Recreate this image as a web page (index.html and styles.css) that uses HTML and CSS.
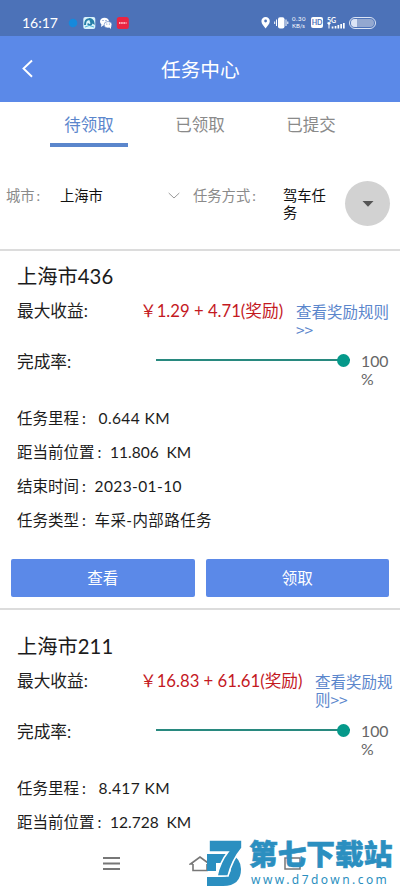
FILE: index.html
```html
<!DOCTYPE html>
<html lang="zh-CN">
<head>
<meta charset="utf-8">
<meta name="viewport" content="width=device-width">
<title>任务中心</title>
<link rel="stylesheet" href="styles.css">
</head>
<body>
<div class="status">
  <span class="clock">16:17</span>
  <svg class="apps" width="62" height="14" viewBox="0 0 62 14">
    <circle cx="5" cy="7" r="4.3" fill="#1689dc"/>
    <rect x="15.3" y="1" width="12" height="12" rx="2" fill="#d9f3fb"/>
    <path d="M17 9c0-8 8-7 8.500-2l-2.500-1.500c1.500 3.500-2 5-3 2" fill="none" stroke="#277fa8" stroke-width="2"/>
    <path d="M17 11q4-3 9 0" fill="none" stroke="#55b8dd"/>
    <ellipse cx="36.500" cy="5.500" rx="4.500" ry="3.800" fill="#fff"/>
    <ellipse cx="40" cy="8.800" rx="3.900" ry="3.300" fill="#fff" stroke="#4c72b8" stroke-width=".6"/>
    <path d="M33.500 8l-.5 3 3-2zM41 11l2 2v-3z" fill="#fff"/>
    <g fill="#4c72b8"><circle cx="35" cy="4.500" r=".6"/><circle cx="38" cy="4.500" r=".6"/><circle cx="38.800" cy="8" r=".5"/><circle cx="41.300" cy="8" r=".5"/></g>
    <rect x="48.800" y="1" width="12" height="12" rx="2.500" fill="#ea2442"/>
    <path d="M51 7h7.500" stroke="#ffb3be" stroke-width="2" stroke-dasharray="1.500 .7"/>
  </svg>
  <svg class="loc" width="28" height="14" viewBox="0 0 28 14">
    <path d="M4.600 1a4.200 4.200 0 0 1 4.200 4.200c0 3-2.700 4.700-4.200 7.300C3 10 .4 8.200.4 5.200A4.200 4.200 0 0 1 4.600 1z" fill="#fff"/>
    <circle cx="4.600" cy="5" r="1.400" fill="#4c72b8"/>
    <rect x="17" y="1.200" width="6.500" height="11.200" rx="2" fill="#fff"/>
    <path d="M15.500 3.500v6.500M25 3.500v6.500M13.700 5.500v2.500M26.800 5.500v2.500" stroke="#fff" stroke-width="1"/>
  </svg>
  <span class="speed"><span class="rateval">0.30</span><span>KB/s</span></span>
  <span class="hd">HD</span>
  <span class="net"><span class="g5">5G</span>
    <svg width="18" height="6" viewBox="0 0 18 6"><path d="M0 0h4L2 2.500zM1.500 2h1v3.500h-1zM4.700 3.500h1.700v2H4.700zM7.700 2.900h1.700v2.600H7.700zM10.500 2h1.700v3.500h-1.700zM13.300 1H15v4.500h-1.700zM16 0h1.700v5.500H16z" fill="#fff"/></svg>
  </span>
  <span class="battery"><span class="charge"></span></span>
</div>
<header class="bar">
  <svg width="12" height="20" viewBox="0 0 12 20"><path d="M10 1.500L1.500 9.500 10 17.800" fill="none" stroke="#fff" stroke-width="1.900"/></svg>
  <h1>任务中心</h1>
</header>
<nav class="tabs">
  <a class="tab on">待领取</a><a class="tab">已领取</a><a class="tab">已提交</a>
</nav>
<section class="filters">
  <span class="flabel city">城市<i>:</i></span>
  <span class="fvalue cityname">上海市</span>
  <svg class="chev" width="12" height="8" viewBox="0 0 12 8"><path d="M.7 1L6 6l5.300-5" fill="none" stroke="#999" stroke-width="1"/></svg>
  <span class="flabel mode">任务方式<i>:</i></span>
  <span class="fvalue modename">驾车任务</span>
  <span class="drop"><svg width="12" height="6" viewBox="0 0 12 6"><path d="M.5 0h11L6 5.800z" fill="#555"/></svg></span>
</section>
<main>
  <article class="card">
    <h2>上海市<span class="num">436</span></h2>
    <div class="row gain"><span class="label">最大收益:</span><span class="money">￥1.29 + 4.71(奖励)</span><a class="rule">查看奖励规则&gt;&gt;</a></div>
    <div class="row rate"><span class="label">完成率:</span><span class="slider"><span class="thumb"></span></span><span class="pct">100<br>%</span></div>
    <dl class="details">
      <div><dt>任务里程</dt><dd class="dist">0.644 KM</dd></div>
      <div><dt>距当前位置</dt><dd>11.806&nbsp; KM</dd></div>
      <div><dt>结束时间</dt><dd class="date">2023-01-10</dd></div>
      <div><dt>任务类型</dt><dd class="date">车采-内部路任务</dd></div>
    </dl>
    <div class="actions"><button>查看</button><button>领取</button></div>
  </article>
  <article class="card">
    <h2>上海市<span class="num">211</span></h2>
    <div class="row gain"><span class="label">最大收益:</span><span class="money wide">￥16.83 + 61.61(奖励)</span><a class="rule">查看奖励规则&gt;&gt;</a></div>
    <div class="row rate"><span class="label">完成率:</span><span class="slider"><span class="thumb"></span></span><span class="pct">100<br>%</span></div>
    <dl class="details">
      <div><dt>任务里程</dt><dd class="dist">8.417 KM</dd></div>
      <div><dt>距当前位置</dt><dd>12.728&nbsp; KM</dd></div>
    </dl>
  </article>
</main>
<footer class="sysnav">
  <svg width="18" height="16" viewBox="0 0 18 16"><path d="M0 2h17M0 7.500h17M0 13h17" stroke="#777" stroke-width="2"/></svg>
  <svg class="home" width="22" height="16" viewBox="0 0 22 16"><path d="M4 8H1.500L11 1l9.500 7H18M4 8v6.500h14V8" fill="none" stroke="#777" stroke-width="1.600"/></svg>
  <svg class="square" width="18" height="16" viewBox="0 0 18 16"><rect x="1" y="2" width="15" height="11" fill="none" stroke="#777" stroke-width="1.500"/></svg>
</footer>
<div class="mark">
  <svg width="38" height="50" viewBox="0 0 38 50">
    <path d="M2 16H26Q36 21 36 31Q36 48 18 48H2V39H16Q26 39 26 30Q26 25 22 25H11V33H2z" fill="#2b8fc0"/>
    <path d="M4 2H37V10Q27 22 23 38H12Q15 24 23 14H4z" fill="#2b8fc0" stroke="#fff" stroke-width="1.600"/>
  </svg>
  <div class="words"><strong>第七下载站</strong><span>www.d7down.com</span></div>
</div>
</body>
</html>
```
FILE: styles.css
```css
* { box-sizing: border-box; }
html, body { margin: 0; height: 888px; overflow: hidden; }
body {
  width: 400px;
  position: relative;
  display: flex;
  flex-direction: column;
  background: #fff;
  color: #1c1c1c;
  font-family: Lato, "Noto Sans CJK SC", sans-serif;
}
h1, h2, dl, dd { margin: 0; font-weight: 400; }
.status {
  height: 36px;
  flex: none;
  display: flex;
  align-items: center;
  padding: 9px 24px 0 22px;
  background: #4c72b8;
  color: #fff;
}
.clock { width: 46px; font-size: 14px; }
.loc { margin-left: 131px; }
.speed { display: flex; flex-direction: column; width: 15px; margin-left: 3px; font-size: 6px; line-height: 6.500px; white-space: nowrap; }
.rateval { letter-spacing: .5px; }
.hd {
  width: 12px;
  height: 11px;
  margin-left: 4px;
  border-radius: 2px;
  background: #fff;
  color: #4c72b8;
  font-size: 7px;
  font-weight: 700;
  line-height: 11px;
  text-align: center;
}
.net { display: flex; flex-direction: column; width: 18px; margin-left: 4px; }
.g5 { font-size: 7px; line-height: 6px; font-weight: 700; }
.battery { width: 27px; height: 12px; margin-left: 4px; padding: 1px; border: 1px solid #dce5f5; border-radius: 6px; background: #93a8d0; background-clip: content-box; flex: none; }
.charge { display: block; width: 6px; height: 8px; border-radius: 4px 0 0 4px; background: #dbe4f5; }
.bar {
  height: 66px;
  flex: none;
  display: flex;
  align-items: center;
  padding-left: 22px;
  background: #5b89e8;
  color: #fff;
}
.bar h1 { margin: -1px 0 0 127px; font-size: 19.700px; }
.tabs { height: 45px; flex: none; display: flex; padding-left: 50px; gap: 33px; }
.tab { width: 78px; font-size: 16.500px; line-height: 47px; height: 45px; text-align: center; color: #8a8a8a; }
.on { color: #5b86cc; border-bottom: 4px solid #5b86cc; }
.filters {
  height: 104px;
  flex: none;
  display: flex;
  align-items: flex-start;
  padding: 40px 0 0 6px;
  border-bottom: 2px solid #dcdcdc;
  font-size: 14.300px;
  line-height: 17px;
}
.flabel { color: #8a8a8a; }
.flabel i { font-style: normal; padding-left: 2px; }
.city { width: 54px; }
.cityname { width: 108px; }
.chev { margin-top: 5px; }
.mode { width: 90px; margin-left: 13px; }
.modename { width: 46px; }
.fvalue { color: #111; }
.drop { width: 45px; height: 45px; margin: -6px 0 0 16px; border-radius: 50%; background: #d2d2d2; display: flex; align-items: center; justify-content: center; }
main { flex: none; }
.card { height: 359px; padding: 10px 11px 0; border-bottom: 2px solid #dcdcdc; }
.card + .card { height: 240px; padding-top: 21px; border: 0; }
h2 { padding-left: 6px; font-size: 20.300px; line-height: 30px; }
.row { display: flex; padding-left: 6px; }
.label { font-size: 16.700px; line-height: 22px; }
.gain { height: 59px; padding-top: 9px; }
.gain .label { width: 123px; }
.money { width: 156px; font-size: 16.700px; line-height: 22px; color: #c4191f; white-space: nowrap; }
.wide { width: 175px; }
.rule { flex: 1; margin-right: -6px; padding-top: 2px; font-family: "Noto Sans CJK SC", sans-serif; font-size: 15.500px; line-height: 18px; color: #5b86cc; word-break: break-all; }
.rate { height: 51px; }
.rate .label { width: 139px; padding-top: 1px; }
.slider { width: 194px; height: 2px; margin-top: 9px; background: #28897f; display: flex; justify-content: flex-end; align-items: center; }
.thumb { flex: none; width: 13px; height: 13px; border-radius: 50%; background: #05998a; }
.pct { margin-left: 11px; padding-top: 2px; font-size: 15.800px; line-height: 18px; color: #666; }
.details { padding-left: 6px; font-size: 15.500px; }
.details div { height: 34px; display: flex; line-height: 34px; white-space: nowrap; }
dt::after { content: ":"; display: inline-block; width: 15.500px; padding-left: 3px; }
dd { margin-left: -3px; }
.dist { padding-left: 4px; letter-spacing: .4px; }
.date { letter-spacing: .4px; }
.actions { display: flex; gap: 11px; margin-top: 22px; }
button { width: 184px; height: 38px; padding: 0; border: 0; border-radius: 2px; background: #5b89e8; color: #fff; font: 400 15.500px/38px Lato, "Noto Sans CJK SC", sans-serif; }
.sysnav { position: absolute; left: 0; right: 0; bottom: 0; height: 48px; padding: 0 98px 0 103px; display: flex; align-items: center; justify-content: space-between; background: #fff; }
.home { position: relative; left: -3px; }
.mark { position: absolute; left: 205px; top: 838px; display: flex; }
.words { margin-left: 6px; display: flex; flex-direction: column; color: #2b8fc0; }
.words strong { margin-top: -1px; font-size: 28.700px; line-height: 35px; font-weight: 900; white-space: nowrap; -webkit-text-stroke: .6px #2b8fc0; }
.words span { padding-left: 2px; font: 12px/15px "Noto Sans", sans-serif; letter-spacing: 2.450px; white-space: nowrap; }
```
